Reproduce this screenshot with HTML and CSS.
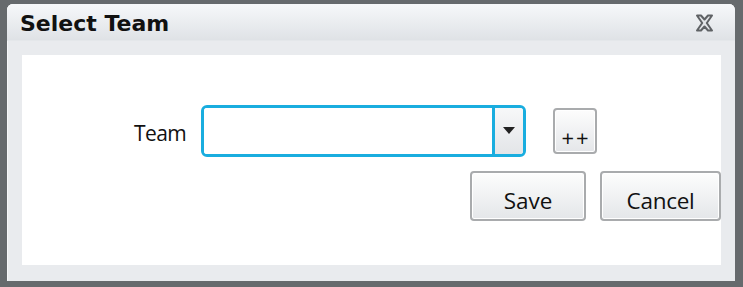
FILE: index.html
```html
<!DOCTYPE html>
<html>
<head>
<meta charset="utf-8">
<link rel="stylesheet" href="styles.css">
</head>
<body>
<div class="dialog">
  <div class="titlebar">
    <span class="title">Select Team</span>
    <svg class="close" width="19" height="18" viewBox="0 0 19 18">
      <path d="M2 1.5 L6 1.5 L9.5 5.5 L13 1.5 L17 1.5 L11.8 9 L17 16.5 L13 16.5 L9.5 12.5 L6 16.5 L2 16.5 L7.2 9 Z" fill="#e3e5e8" stroke="#5f6265" stroke-width="2" stroke-linejoin="round"/>
    </svg>
  </div>
  <div class="content">
    <div class="row">
      <label class="label">Team</label>
      <div class="combo">
        <div class="combo-input"></div>
        <div class="combo-btn"><span class="arrow"></span></div>
      </div>
      <button class="btn btn-add">++</button>
    </div>
    <div class="actions">
      <button class="btn btn-save">Save</button>
      <button class="btn btn-cancel">Cancel</button>
    </div>
  </div>
</div>
</body>
</html>
```

FILE: styles.css
```css
html, body {
  margin: 0;
  padding: 0;
}
body {
  width: 743px;
  height: 287px;
  background: #666a6d;
  overflow: hidden;
}
.dialog {
  margin: 4px 0 0 7px;
  width: 728px;
  height: 277px;
  background: #e9ebee;
  border-radius: 6px 6px 0 0;
  display: flex;
  flex-direction: column;
  box-shadow: inset 1px 1px 0 #f6f7f9;
}
.titlebar {
  height: 36px;
  flex: none;
  display: flex;
  align-items: center;
  justify-content: space-between;
  padding: 0 21px 0 13px;
  background: linear-gradient(#f6f8fa, #dfe2e6);
  border-radius: 6px 6px 0 0;
  border-bottom: 1px solid #e4e7ea;
}
.title {
  font-family: "DejaVu Sans", Verdana, sans-serif;
  font-weight: bold;
  font-size: 22px;
  color: #111;
  margin-top: 2px;
}
.close {
  display: block;
  margin-top: 2px;
}
.content {
  margin: 14px 14px 16px 15px;
  height: 210px;
  background: #fff;
  padding-top: 50px;
  box-sizing: border-box;
  font-family: "Segoe UI", "Open Sans", sans-serif;
}
.row {
  display: flex;
  align-items: center;
  padding-left: 112px;
  height: 52px;
}
.label {
  font-size: 21px;
  color: #111;
  width: 55px;
  margin-right: 12px;
  letter-spacing: -0.6px;
  margin-top: 4px;
}
.combo {
  width: 325px;
  height: 52px;
  box-sizing: border-box;
  border: 3px solid #19addf;
  border-radius: 6px;
  display: flex;
  overflow: hidden;
}
.combo-input {
  flex: 1;
  background: #fff;
}
.combo-btn {
  width: 31px;
  border-left: 3px solid #19addf;
  background: linear-gradient(#f7f8f9, #e3e5e8);
  display: flex;
  justify-content: center;
  padding-top: 19px;
  box-sizing: border-box;
}
.arrow {
  width: 0;
  height: 0;
  border-left: 6px solid transparent;
  border-right: 6px solid transparent;
  border-top: 7px solid #222;
}
.btn {
  font-family: "Segoe UI", "Open Sans", sans-serif;
  color: #111;
  background: linear-gradient(#fdfdfd, #e4e6e9);
  border: 2px solid #a9abad;
  border-radius: 4px;
  box-shadow: inset 0 0 0 1px #fff;
  padding: 0;
  box-sizing: border-box;
}
.btn-add {
  width: 44px;
  height: 46px;
  margin-left: 27px;
  font-size: 22px;
  padding-top: 12px;
  letter-spacing: 2px;
  text-indent: 2px;
}
.actions {
  display: flex;
  justify-content: flex-end;
  gap: 14px;
  margin-top: 14px;
  padding-right: 0;
}
.btn-save {
  width: 116px;
  height: 50px;
  font-size: 22.5px;
  padding-top: 8px;
}
.btn-cancel {
  width: 121px;
  height: 50px;
  font-size: 22.5px;
  padding-top: 8px;
  letter-spacing: -0.3px;
}
```
